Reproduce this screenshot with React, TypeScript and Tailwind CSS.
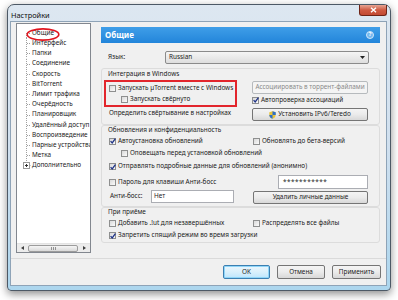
import React from "react";

function Check({ checked }: { checked?: boolean }) {
  return (
    <span className="inline-flex w-[7px] h-[7px] shrink-0 border border-[#8e8f8f] bg-linear-to-br from-[#d9d9d9] to-[#fbfbfb] items-center justify-center">
      {checked && (
        <svg width="6" height="6" viewBox="0 0 6 6" className="overflow-visible">
          <path d="M0.6 3.1 L2.2 4.9 L5.4 0.6" stroke="#1f3387" strokeWidth="1.3" fill="none" />
        </svg>
      )}
    </span>
  );
}

function CB({ label, checked, className = "" }: { label: string; checked?: boolean; className?: string }) {
  return (
    <div className={"flex items-center gap-[2px] whitespace-nowrap " + className}>
      <Check checked={checked} />
      <span>{label}</span>
    </div>
  );
}

function Btn({ children, className = "", disabled }: { children: React.ReactNode; className?: string; disabled?: boolean }) {
  return (
    <div
      className={
        "flex items-center justify-center rounded-[2px] border whitespace-nowrap " +
        (disabled
          ? "border-[#b6babd] bg-[#f4f4f4] text-[#8a8a8a] "
          : "border-[#757575] bg-linear-to-b from-[#f4f4f4] via-[#ebebeb] to-[#d8d8d8] ") +
        className
      }
    >
      {children}
    </div>
  );
}

function TreeRow({ label, first, last, plus }: { label: string; first?: boolean; last?: boolean; plus?: boolean }) {
  return (
    <div className="flex items-center h-[10.2px]">
      <svg width="14" height="10.2" className="shrink-0">
        <line x1="8.5" y1={first ? 5 : 0} x2="8.5" y2={last ? 2 : 10.2} stroke="#a0a0a0" strokeDasharray="1 1" />
        <line x1={plus ? 11.5 : 9} y1="5.5" x2="13" y2="5.5" stroke="#a0a0a0" strokeDasharray="1 1" />
        {plus && (
          <g>
            <rect x="5.5" y="2.5" width="6" height="6" fill="#fff" stroke="#9a9a9a" />
            <line x1="7" y1="5.5" x2="10" y2="5.5" stroke="#333" />
            <line x1="8.5" y1="4" x2="8.5" y2="7" stroke="#333" />
          </g>
        )}
      </svg>
      <span className="whitespace-nowrap">{label}</span>
    </div>
  );
}

export default function App() {
  const tree = [
    "Общие",
    "Интерфейс",
    "Папки",
    "Соединение",
    "Скорость",
    "BitTorrent",
    "Лимит трафика",
    "Очерёдность",
    "Планировщик",
    "Удалённый доступ",
    "Воспроизведение",
    "Парные устройства",
    "Метка",
  ];
  return (
    <div className="w-[398px] h-[300px] bg-white overflow-hidden pt-[4px] pl-[7px] text-[#1b1b1b] text-[6.4px] leading-none font-['Noto_Sans','Open_Sans',sans-serif]">
      {/* window */}
      <div className="w-[384px] h-[287px] rounded-t-[7px] rounded-b-[4px] border border-[#4d5966] bg-linear-to-b from-[#dde7f1] via-[#d0e0ef] to-[#acd6ee] shadow-[0_3px_8px_rgba(0,0,0,0.45)] flex flex-col pl-[2px] pr-[3px] pb-[4px]">
        {/* title bar */}
        <div className="h-[16px] flex justify-between items-start">
          <span className="mt-[6px] ml-[1px] text-[7.4px] leading-[8px] text-[#101010]">Настройки</span>
          <div className="w-[28px] h-[11px] rounded-b-[3px] border border-t-0 border-[#6e2417] bg-linear-to-b from-[#e6a493] via-[#cf5a42] to-[#c24a33] flex items-center justify-center">
            <svg width="7" height="6" viewBox="0 0 7 6">
              <path d="M1 0.8 L6 5.2 M6 0.8 L1 5.2" stroke="#ffffff" strokeWidth="1.4" />
            </svg>
          </div>
        </div>
        {/* client */}
        <div className="flex-1 bg-[#f0f0f0] border border-[#8ea3b7] flex flex-col">
          <div className="h-[236px] flex items-start">
            {/* tree */}
            <div className="relative ml-[5px] mt-[1px] w-[75px] h-[230px] bg-white border border-[#82878f] flex flex-col">
              <div className="flex-1 overflow-hidden pt-[4px] pl-[1px]">
                {tree.map((t, i) => (
                  <TreeRow key={t} label={t} first={i === 0} />
                ))}
                <TreeRow label="Дополнительно" last plus />
              </div>
              <div className="h-[9px] flex items-center bg-[#ececec] border-t border-[#e3e3e3]">
                <span className="w-[11px] flex justify-center">
                  <svg width="3" height="4" viewBox="0 0 3 4"><path d="M3 0 L0 2 L3 4 Z" fill="#404040" /></svg>
                </span>
                <div className="w-[50px] h-[7px] rounded-[2px] border border-[#9c9c9c] bg-linear-to-b from-[#f6f6f6] to-[#d9d9d9] flex items-center justify-center">
                  <svg width="5" height="3" viewBox="0 0 5 3">
                    <path d="M0.5 0 V3 M2.5 0 V3 M4.5 0 V3" stroke="#7a7a7a" strokeWidth="0.8" />
                  </svg>
                </div>
                <span className="flex-1 flex justify-center">
                  <svg width="3" height="4" viewBox="0 0 3 4"><path d="M0 0 L3 2 L0 4 Z" fill="#404040" /></svg>
                </span>
              </div>
              {/* red highlight ellipse */}
              <svg className="absolute left-[9px] top-[4px]" width="34" height="13" viewBox="0 0 34 13">
                <ellipse cx="17" cy="6.5" rx="15.8" ry="5.6" fill="none" stroke="#e0161f" strokeWidth="1.6" />
              </svg>
            </div>

            {/* right panel */}
            <div className="ml-[10px] mt-[5px] w-[279px] flex flex-col">
              <div className="h-[16px] bg-linear-to-b from-[#3f9ee8] to-[#2285da] flex items-center justify-between pl-[4px] pr-[6px]">
                <span className="text-white font-bold text-[8px]">Общие</span>
                <span className="w-[8px] h-[8px] rounded-full bg-[#75b8ef] border border-[#cfe6fa] text-white font-bold text-[5.5px] flex items-center justify-center">?</span>
              </div>

              <div className="mt-[8px] h-[13px] flex items-center">
                <span className="pl-[7px] w-[64px]">Язык:</span>
                <div className="w-[204px] h-[13px] rounded-[2px] border border-[#8b8b8b] bg-linear-to-b from-[#f5f5f5] to-[#dedede] flex items-center justify-between pl-[3px] pr-[3px]">
                  <span>Russian</span>
                  <svg width="5" height="3" viewBox="0 0 5 3"><path d="M0 0 H5 L2.5 3 Z" fill="#222" /></svg>
                </div>
              </div>

              {/* group 1 */}
              <div className="mt-[4px] h-[57px] border border-[#dcdcdc] rounded-[3px] flex flex-col">
                <div className="pt-[1px] h-[9px] pl-[6px] flex items-center">Интеграция в Windows</div>
                <div className="flex">
                  <div className="w-[150px] pl-[2px] pt-[2px] flex flex-col">
                    <div className="w-[133px] h-[27px] border-2 border-[#e2252c] flex flex-col pl-[3px]">
                      <CB className="h-[12px]" label="Запускать µTorrent вместе с Windows" />
                      <CB className="h-[11px] pl-[12px]" label="Запускать свёрнуто" />
                    </div>
                    <div className="h-[12px] pl-[5px] flex items-center whitespace-nowrap">Определить свёртывание в настройках</div>
                  </div>
                  <div className="w-[116px] pt-[3px] flex flex-col">
                    <Btn disabled className="h-[13px]">Ассоциировать в торрент-файлами</Btn>
                    <CB className="mt-[2px] h-[8px]" checked label="Автопроверка ассоциаций" />
                    <Btn className="mt-[4px] h-[13px] gap-[2px]">
                      <svg width="7" height="8" viewBox="0 0 7 8">
                        <path d="M3.5 0.3 L6.7 1.3 V4 C6.7 6 5 7.2 3.5 7.8 C2 7.2 0.3 6 0.3 4 V1.3 Z" fill="#e9c43a" />
                        <path d="M3.5 0.3 L6.7 1.3 V4 H3.5 Z" fill="#2d6fc7" />
                        <path d="M3.5 4 H0.3 C0.3 6 2 7.2 3.5 7.8 Z" fill="#2d6fc7" />
                      </svg>
                      <span>Установить IPv6/Teredo</span>
                    </Btn>
                  </div>
                </div>
              </div>

              {/* group 2 */}
              <div className="h-[82px] border border-[#dcdcdc] rounded-[3px] flex flex-col">
                <div className="h-[9px] pl-[6px] flex items-center">Обновления и конфиденциальность</div>
                <div className="h-[12px] flex items-center pl-[7px]">
                  <CB className="w-[144px]" checked label="Автоустановка обновлений" />
                  <CB label="Обновлять до бета-версий" />
                </div>
                <CB className="h-[13px] pl-[19px]" label="Оповещать перед установкой обновлений" />
                <CB className="h-[13px] pl-[7px]" checked label="Отправлять подробные данные для обновлений (анонимно)" />
                <div className="mt-[2px] h-[14px] flex items-center pl-[7px]">
                  <CB className="w-[169px]" label="Пароль для клавиши Анти-босс" />
                  <div className="w-[90px] h-[14px] bg-white border border-[#abadb3] flex items-center pl-[4px] tracking-[0.5px]">***********</div>
                </div>
                <div className="mt-[1px] h-[14px] flex items-start pl-[8px]">
                  <span className="w-[41px] h-[13px] flex items-center">Анти-босс:</span>
                  <div className="w-[83px] h-[13px] bg-white border border-[#abadb3] flex items-center pl-[2px]">Нет</div>
                  <Btn className="ml-[19px] mt-[1px] w-[115px] h-[13px]">Удалить личные данные</Btn>
                </div>
              </div>

              {/* group 3 */}
              <div className="h-[36px] border border-[#dcdcdc] rounded-[3px] flex flex-col">
                <div className="h-[9px] pl-[6px] flex items-center">При приёме</div>
                <div className="h-[12px] flex items-center pl-[7px]">
                  <CB className="w-[144px]" label="Добавить .!ut для незавершённых" />
                  <CB label="Распределять все файлы" />
                </div>
                <CB className="h-[13px] pl-[7px]" checked label="Запретить спящий режим во время загрузки" />
              </div>
            </div>
          </div>

          {/* bottom */}
          <div className="flex-1 border-t border-[#dadada] flex justify-end items-start pt-[6px] pr-[5px] gap-[7px]">
            <div className="w-[47px] h-[14px] rounded-[2px] border border-[#3c7fb1] bg-linear-to-b from-[#eaf6fd] via-[#d9f0fc] to-[#bee6fd] shadow-[inset_0_0_0_1px_#8fd6f9] flex items-center justify-center">OK</div>
            <Btn className="w-[48px] h-[14px]">Отмена</Btn>
            <Btn className="w-[49px] h-[14px]">Применить</Btn>
          </div>
        </div>
      </div>
    </div>
  );
}
